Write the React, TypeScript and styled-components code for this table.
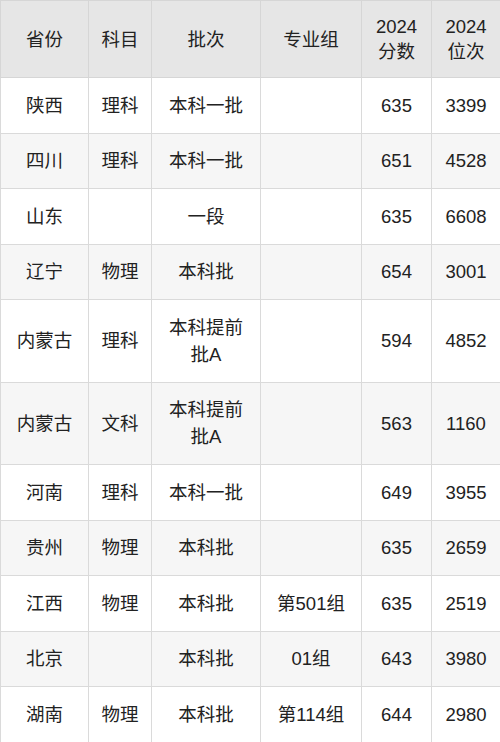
import styled, { createGlobalStyle } from "styled-components"

const GlobalStyle = createGlobalStyle`
    html, body {
        margin: 0;
        padding: 0;
        background: #ffffff;
    }
    body {
        font-family: "Liberation Sans", "Noto Sans CJK SC", sans-serif;
        color: #222222;
    }
`

const Table = styled.table`
    width: 500px;
    border-collapse: collapse;
    table-layout: fixed;
    font-size: 18.5px;
`

const HeadCell = styled.th`
    background: #e6e6e6;
    border: 1px solid #d6d6d6;
    font-weight: normal;
    line-height: 25px;
    height: 76px;
    padding: 0 2px;
    text-align: center;
    vertical-align: middle;
`

const Row = styled.tr<{ $striped: boolean; $tall: boolean }>`
    background: ${(p) => (p.$striped ? "#f6f6f6" : "#ffffff")};
    height: ${(p) => (p.$tall ? "82.5px" : "55.5px")};
`

const Cell = styled.td`
    border: 1px solid #dadada;
    line-height: 27px;
    padding: 0 4px;
    text-align: center;
    vertical-align: middle;
`

const widths = [88, 63, 109, 101, 70, 69]

const headers = ["省份", "科目", "批次", "专业组", "2024\n分数", "2024\n位次"]

const rows = [
    ["陕西", "理科", "本科一批", "", "635", "3399"],
    ["四川", "理科", "本科一批", "", "651", "4528"],
    ["山东", "", "一段", "", "635", "6608"],
    ["辽宁", "物理", "本科批", "", "654", "3001"],
    ["内蒙古", "理科", "本科提前\n批A", "", "594", "4852"],
    ["内蒙古", "文科", "本科提前\n批A", "", "563", "1160"],
    ["河南", "理科", "本科一批", "", "649", "3955"],
    ["贵州", "物理", "本科批", "", "635", "2659"],
    ["江西", "物理", "本科批", "第501组", "635", "2519"],
    ["北京", "", "本科批", "01组", "643", "3980"],
    ["湖南", "物理", "本科批", "第114组", "644", "2980"],
]

function Lines({ text }: { text: string }): JSX.Element {
    const parts = text.split("\n")
    return (
        <>
            {parts.map((p, i) => (
                <span key={i}>
                    {p}
                    {i < parts.length - 1 && <br />}
                </span>
            ))}
        </>
    )
}

function App(): JSX.Element {
    return (
        <>
            <GlobalStyle />
            <Table>
                <colgroup>
                    {widths.map((w, i) => (
                        <col key={i} style={{ width: w }} />
                    ))}
                </colgroup>
                <thead>
                    <tr>
                        {headers.map((h) => (
                            <HeadCell key={h}>
                                <Lines text={h} />
                            </HeadCell>
                        ))}
                    </tr>
                </thead>
                <tbody>
                    {rows.map((r, i) => (
                        <Row key={i} $striped={i % 2 === 1} $tall={r[2].includes("\n")}>
                            {r.map((c, j) => (
                                <Cell key={j}>
                                    <Lines text={c} />
                                </Cell>
                            ))}
                        </Row>
                    ))}
                </tbody>
            </Table>
        </>
    )
}

export default App
